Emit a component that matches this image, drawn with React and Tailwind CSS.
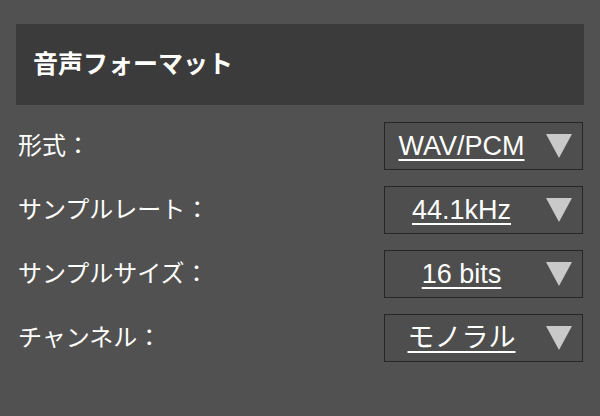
const ROWS = [
  { label: '形式：', value: 'WAV/PCM' },
  { label: 'サンプルレート：', value: '44.1kHz' },
  { label: 'サンプルサイズ：', value: '16 bits' },
  { label: 'チャンネル：', value: 'モノラル' },
];

const font = { fontFamily: '"Liberation Sans", "Noto Sans CJK JP", sans-serif' };

const Select = ({ value }) => (
  <div className="flex h-[48px] w-[199px] items-center border border-[#262626] bg-[#4e4e4e]">
    <div className="flex flex-1 justify-center pr-[8px]">
      <span className="text-[27px] leading-none text-white underline decoration-[2px] underline-offset-[4px]">
        {value}
      </span>
    </div>
    <svg width="26" height="24" viewBox="0 0 26 24" className="mr-[10px]">
      <polygon points="0,0 26,0 13,24" fill="#c9c9c9" />
    </svg>
  </div>
);

export default function App() {
  return (
    <div className="h-[416px] w-[600px] bg-[#515151] pt-[24px]" style={font}>
      <div className="mx-[16px] flex h-[81px] items-center bg-[#3b3b3b] pl-[17px]">
        <h1 className="text-[25px] font-bold text-white">音声フォーマット</h1>
      </div>
      <div className="mt-[17px] flex flex-col gap-[16px] pl-[18px] pr-[17px]">
        {ROWS.map((row) => (
          <div key={row.label} className="flex items-center justify-between">
            <span className="text-[24px] text-white">{row.label}</span>
            <Select value={row.value} />
          </div>
        ))}
      </div>
    </div>
  );
}
